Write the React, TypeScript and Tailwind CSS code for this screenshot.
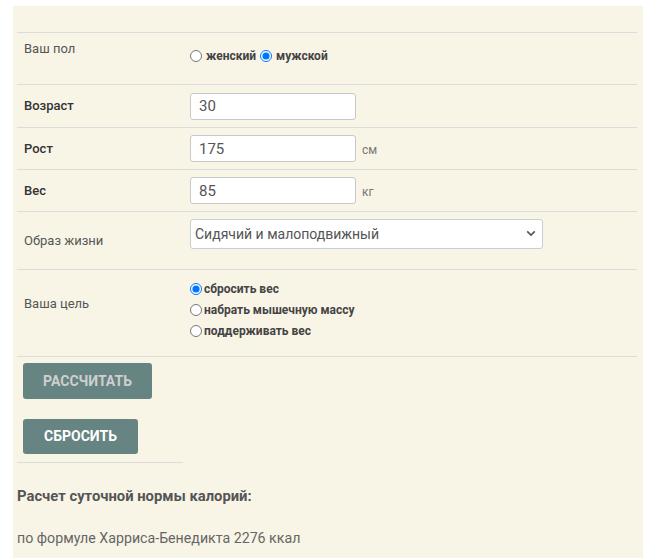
import { ReactNode } from "react";

const FONT = "font-['Roboto','Liberation_Sans',sans-serif]";

function Row({
  className,
  children,
}: {
  className: string;
  children: ReactNode;
}) {
  return (
    <div className={`flex border-t border-[#dcdcdc] ${className}`}>
      {children}
    </div>
  );
}

function Radio({
  checked,
  label,
  gap,
}: {
  checked?: boolean;
  label: string;
  gap: string;
}) {
  return (
    <label
      className={`flex h-[18px] items-center text-[12px] font-bold text-[#444] ${gap}`}
    >
      <input
        type="radio"
        defaultChecked={checked}
        className="m-0 h-[12px] w-[12px] accent-[#0075ff]"
      />
      {label}
    </label>
  );
}

function NumberField({ value, unit }: { value: string; unit?: string }) {
  return (
    <div className="flex items-center">
      <input
        defaultValue={value}
        className="h-[27px] w-[166px] rounded-[3px] border border-[#c8c8c8] bg-white px-[8px] text-[15px] text-[#555] outline-none"
      />
      {unit ? (
        <span className="ml-[6px] mt-[2px] text-[12px] text-[#777]">{unit}</span>
      ) : null}
    </div>
  );
}

export default function App() {
  return (
    <div className={`bg-white pt-[6px] pl-[13px] pr-[10px] ${FONT}`}>
      <div className="h-[552px] bg-[#f8f5e7] px-[4px] pt-[26px]">
        <div className="w-[620px]">
          <Row className="h-[52px] items-start">
            <div className="w-[173px] pl-[7px] pt-[6px] text-[13px] text-[#555]">
              Ваш пол
            </div>
            <div className="flex items-center gap-[4px] pt-[14px]">
              <Radio label="женский" gap="gap-[4px]" />
              <Radio label="мужской" gap="gap-[4px]" checked />
            </div>
          </Row>
          <Row className="h-[43px] items-center">
            <div className="w-[173px] pl-[7px] text-[13px] font-medium text-[#333]">
              Возраст
            </div>
            <NumberField value="30" />
          </Row>
          <Row className="h-[42px] items-center">
            <div className="w-[173px] pl-[7px] text-[13px] font-medium text-[#333]">
              Рост
            </div>
            <NumberField value="175" unit="см" />
          </Row>
          <Row className="h-[42px] items-center">
            <div className="w-[173px] pl-[7px] text-[13px] font-medium text-[#333]">
              Вес
            </div>
            <NumberField value="85" unit="кг" />
          </Row>
          <Row className="h-[58px]">
            <div className="w-[173px] pl-[7px] pt-[19px] text-[13px] text-[#555]">
              Образ жизни
            </div>
            <div className="relative mt-[7px] h-[30px] w-[353px]">
              <select className="h-full w-full appearance-none rounded-[3px] border border-[#c5d0d0] bg-white pl-[4px] text-[14px] text-[#555] outline-none">
                <option>Сидячий и малоподвижный</option>
              </select>
              <svg
                viewBox="0 0 12 8"
                className="pointer-events-none absolute right-[7px] top-[11px] h-[7px] w-[10px]"
              >
                <path
                  d="M1.5 1.5 L6 6 L10.5 1.5"
                  fill="none"
                  stroke="#555"
                  strokeWidth="2"
                />
              </svg>
            </div>
          </Row>
          <Row className="h-[87px]">
            <div className="w-[173px] pl-[7px] pt-[24px] text-[13px] text-[#555]">
              Ваша цель
            </div>
            <div className="flex flex-col gap-[3px] pt-[10px]">
              <Radio label="сбросить вес" gap="gap-[2px]" checked />
              <Radio label="набрать мышечную массу" gap="gap-[2px]" />
              <Radio label="поддерживать вес" gap="gap-[2px]" />
            </div>
          </Row>
          <div className="border-t border-[#dcdcdc] pl-[6px] pt-[6px]">
            <button className="h-[36px] w-[129px] rounded-[3px] bg-[#658482] text-[14px] font-bold text-[#cfcfcf]">
              РАССЧИТАТЬ
            </button>
            <div className="pt-[20px]">
              <button className="h-[35px] w-[115px] rounded-[3px] bg-[#658482] text-[14px] font-bold text-white">
                СБРОСИТЬ
              </button>
            </div>
          </div>
          <div className="mt-[8px] w-[166px] border-t border-[#dcdcdc]" />
          <div className="pt-[22px] text-[14.8px] font-bold text-[#555]">
            Расчет суточной нормы калорий:
          </div>
          <div className="pt-[21px] text-[14.2px] text-[#666]">
            по формуле Харриса-Бенедикта 2276 ккал
          </div>
        </div>
      </div>
    </div>
  );
}
